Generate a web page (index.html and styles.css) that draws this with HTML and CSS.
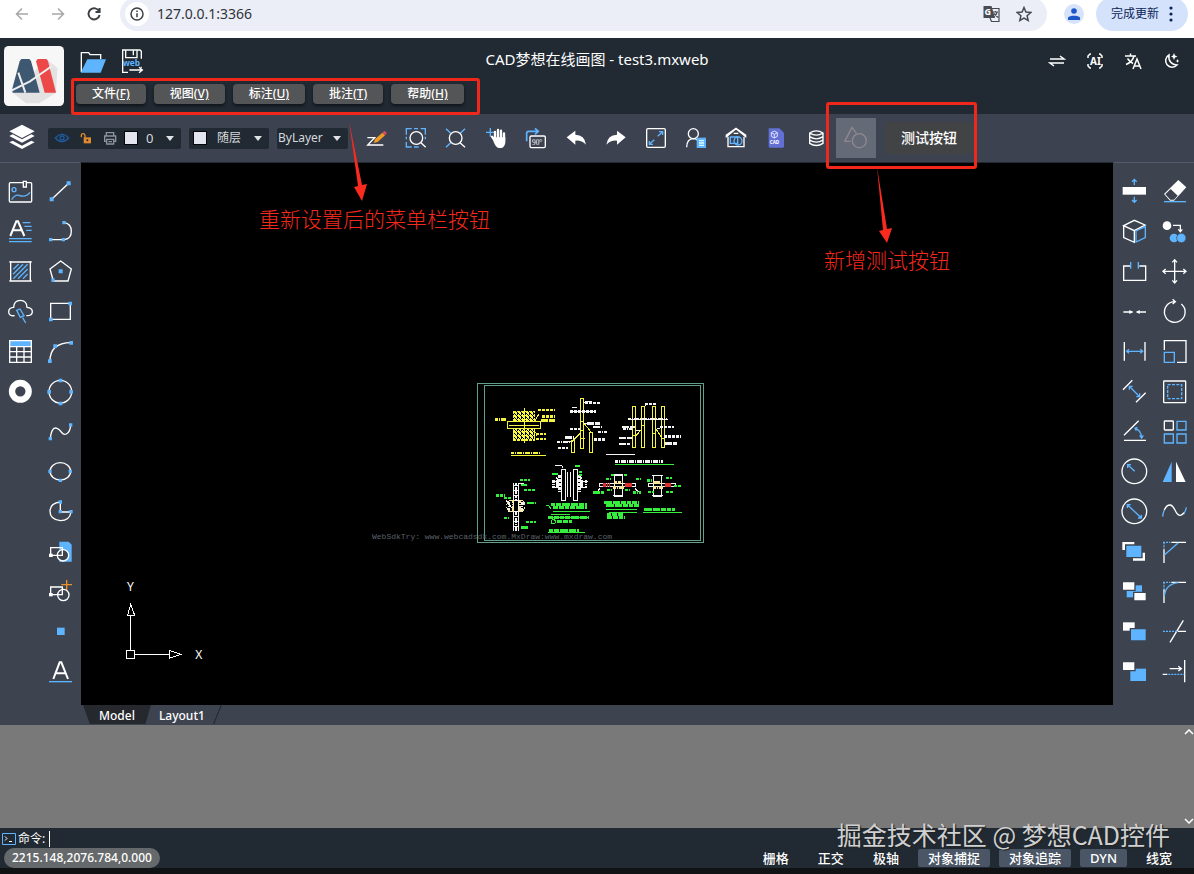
FILE: index.html
```html
<!DOCTYPE html>
<html lang="zh-CN">
<head>
<meta charset="utf-8">
<title>CAD梦想在线画图</title>
<link rel="stylesheet" href="styles.css">
</head>
<body>
<div class="browser">
  <button class="nav dim" aria-label="后退"><svg width="14" height="14" viewBox="0 0 14 14"><path d="M13 7H2M7 1.500L1.500 7 7 12.500"/></svg></button>
  <button class="nav dim" aria-label="前进"><svg width="14" height="14" viewBox="0 0 14 14"><path d="M1 7h11M7 1.500L12.500 7 7 12.500"/></svg></button>
  <button class="nav" aria-label="刷新"><svg width="14" height="14" viewBox="0 0 14 14"><path d="M12.200 4.500A5.600 5.600 0 1 0 12.600 8M12.600 1v4H8.500"/></svg></button>
  <div class="address">
    <span class="info"><svg width="14" height="14" viewBox="0 0 14 14"><circle cx="7" cy="7" r="6"/><path d="M7 6.200v4M7 3.500v1.500"/></svg></span>
    <input class="url" aria-label="地址" value="127.0.0.1:3366">
    <button class="addr-icon" aria-label="翻译"><svg width="18" height="18" viewBox="0 0 18 18"><path d="M1.500 1h8l3.500 12H1.500z" fill="#474b52" stroke="none"/><path d="M10 3.500h7v13H9.500L8 13M11 7h5M13.500 6v1M15 7.500c-.5 2-2 3.500-3.500 4.500M12 8.500l4 4" stroke-width="1.200"/><text x="2.500" y="10" class="tiny-g">G</text></svg></button>
    <button class="addr-icon" aria-label="收藏"><svg width="16" height="16" viewBox="0 0 16 16"><path d="M8 1.500l1.900 4.600 4.900.4-3.700 3.200 1.100 4.800L8 12l-4.200 2.500 1.100-4.800L1.200 6.500l4.900-.4z"/></svg></button>
  </div>
  <button class="avatar" aria-label="用户"><svg width="12" height="12" viewBox="0 0 12 12"><circle cx="6" cy="3" r="2.800"/><path d="M0 12V9.500C1.500 7 10.500 7 12 9.500V12z"/></svg></button>
  <button class="update">完成更新<svg width="4" height="16" viewBox="0 0 4 16"><circle cx="2" cy="2" r="1.600"/><circle cx="2" cy="8" r="1.600"/><circle cx="2" cy="14" r="1.600"/></svg></button>
</div>

<header class="header">
  <div class="brand">
    <svg class="logo" viewBox="0 0 180 180"><rect width="180" height="180" rx="14" fill="#f7f7f7"/><path d="M26 140l40 32h40l50-32 4-74-32-26z" fill="#e2e2e2"/><path d="M47 46l5-7h24l5 6 26 95H26l-2-8 4-16z" fill="#3f5872"/><path d="M96 46l5-7h26l5 6 24 95h-34z" fill="#ec4848"/><path d="M22 134l56-28 66-46M43 80l21 60" stroke="#eee" stroke-width="6"/></svg>
    <div class="brand-rows">
      <div class="quick">
        <button class="quick-btn" aria-label="打开"><svg width="26" height="26" viewBox="240 144 78 78"><path class="w" d="M244 216v-58h22l4 6h32v14"/><path class="bf" d="M242 218l20-40h56l-16 40z"/></svg></button>
        <button class="quick-btn" aria-label="保存"><svg width="26" height="26" viewBox="360 146 78 78"><path class="w" d="M384 219h-16v-67h52l4 4v22M368 178v-26M377 152v23h34v-23M400 154v14M424 202v3M388 212h38m-9-8l10 8-10 8"/><text x="368" y="200" class="web">web</text></svg></button>
      </div>
      <nav class="menu">
        <button>文件(<u>F)</u></button><button>视图(<u>V)</u></button><button>标注(<u>U)</u></button><button>批注(<u>T)</u></button><button>帮助(<u>H)</u></button>
      </nav>
    </div>
  </div>
  <h1 class="title">CAD梦想在线画图 - test3.mxweb</h1>
  <div class="actions">
    <button aria-label="切换"><svg viewBox="0 0 18 18"><path d="M2 7h14l-4-3M16 11H2l4 3"/></svg></button>
    <button aria-label="AI"><svg viewBox="0 0 18 18"><path d="M5 2H4L2 4v2M13 2h1l2 2v2M5 16H4l-2-2v-2M13 16h1l2-2v-2"/><text x="4" y="13" class="ai">AI</text></svg></button>
    <button aria-label="语言"><svg viewBox="0 0 18 18"><path d="M1 4h11M6.500 1.500V4M10 4c-1 4-4 7-8 8.500M3.500 6.500c2 3 3.500 4 5.500 5M9 17l4-10 4 10M10.500 14h5"/></svg></button>
    <button aria-label="主题"><svg viewBox="0 0 18 18"><path d="M7 3a6.500 6.500 0 1 0 8 10C10 13 6 9 7 3z"/><path class="wf" d="M12 1l1 2.500L15.500 4.500 13 5.500 12 8l-1-2.500L9 4.500l2-1zM15.500 7l.6 1.400 1.400.6-1.400.6-.6 1.400-.6-1.400-1.400-.6 1.400-.6z"/></svg></button>
  </div>
</header>

<div class="toolbar">
  <button class="layers" aria-label="图层"><svg width="28" height="28" viewBox="24 378 84 84"><path class="wf" d="M66 380l38 20-38 20-38-20zM28 414l10-5 28 15 28-15 10 5-38 20zM28 433l10-5 28 15 28-15 10 5-38 20z"/></svg></button>
  <div class="combo combo-layer">
    <svg width="16" height="16" viewBox="162 390 48 48"><path d="M166 414q20-22 40 0-20 22-40 0z" stroke="#20589c"/><circle cx="186" cy="414" r="6" stroke="#20589c"/></svg>
    <svg width="16" height="16" viewBox="234 390 48 48"><path d="M244 412v-6q0-5 5-5t6 5v8" stroke="#e08a2c"/><path d="M251 412h22v18h-22z" fill="#e08a2c"/><circle cx="262" cy="421" r="3" fill="#222a34"/></svg>
    <svg width="16" height="16" viewBox="306 390 48 48"><path d="M319 406v-8h22v8M319 424h-5v-16h33v16h-5M320 418h21v14h-21zM325 425h11" stroke="#8d939b"/></svg>
    <span class="swatch"></span>
    <select aria-label="当前图层"><option>0</option></select>
    <svg class="caret" width="8" height="5" viewBox="0 0 8 5"><path d="M0 0h8L4 5z"/></svg>
  </div>
  <div class="combo combo-color">
    <span class="swatch"></span>
    <select aria-label="颜色"><option>随层</option></select>
    <svg class="caret" width="8" height="5" viewBox="0 0 8 5"><path d="M0 0h8L4 5z"/></svg>
  </div>
  <div class="combo combo-line">
    <select aria-label="线型"><option>ByLayer</option></select>
    <svg class="caret" width="8" height="5" viewBox="0 0 8 5"><path d="M0 0h8L4 5z"/></svg>
  </div>
  <div class="tools">
    <button aria-label="绘制"><svg viewBox="-12 354 120 120"><path class="w" d="M22 413h22l-21 22h47"/><path d="M41 429l4-11 22-20 8 8-22 20z" fill="#f29b24"/><path d="M67 398l6-6 8 7-6 7z" fill="#d94a5c"/></svg></button>
    <button aria-label="窗口缩放"><svg viewBox="108 354 120 120"><path class="b" d="M139 404v-18h16M182 386h14v18M139 426v15h16M162 386h12M139 410v8M162 441h14M196 410v8"/><circle class="w" cx="169" cy="414" r="19"/><path class="w" d="M183 428l14 14"/></svg></button>
    <button aria-label="范围缩放"><svg viewBox="228 354 120 120"><path class="b" d="M258 386l14 14M315 386l-14 14M258 442l14-14"/><circle class="w" cx="287" cy="414" r="19"/><path class="w" d="M300 428l15 14"/></svg></button>
    <button aria-label="平移"><svg viewBox="348 354 120 120"><path class="b" d="M391 384v26M378 397h26"/><path d="M405 420v-24M414 418v-28M423 418v-26M432 420v-20M396 410l12 18" stroke="#fff" stroke-width="7" stroke-linecap="round"/><path class="wf" d="M401 412h35v16q-3 15-13 16h-8q-7-2-14-18z"/></svg></button>
    <button aria-label="旋转90度"><svg viewBox="468 354 120 120"><path class="b" d="M500 424v-24q0-6 6-6h28m-9-9l10 9-10 9" stroke-width="5"/><rect class="w" x="510" y="408" width="46" height="35" rx="4"/><text x="516" y="435" class="deg">90°</text></svg></button>
    <button aria-label="撤销"><svg viewBox="588 354 120 120"><path class="wf" d="M620 412l26-20v12q28 0 32 30-14-14-32-12v12z"/></svg></button>
    <button aria-label="重做"><svg viewBox="708 354 120 120"><path class="wf" d="M797 412l-26-20v12q-28 0-32 30 14-14 32-12v12z"/></svg></button>
    <button aria-label="全屏"><svg viewBox="828 354 120 120"><rect class="w" x="860" y="386" width="56" height="56" rx="4"/><path class="b" d="M893 409l15-14m-11 0h11v10M883 419l-15 14m11 0h-11v-10"/></svg></button>
    <button aria-label="用户"><svg viewBox="948 354 120 120"><circle class="w" cx="1000" cy="401" r="15"/><path class="w" d="M980 442q0-25 20-26 8 0 12 4"/><path class="bf" d="M1010 413h28v31h-28z"/><path d="M1017 422h15M1017 429h15M1017 436h15" stroke="#dff"/></svg></button>
    <button aria-label="图库"><svg viewBox="1068 354 120 120"><path class="w" d="M1099 410l29-24 29 24v-5l-29-20-29 20zM1104 410v30h48v-30M1121 400h14"/><path class="b" d="M1111 411h22v19h-22z"/><circle class="b" cx="1134" cy="423" r="12"/></svg></button>
    <button aria-label="CAD文件"><svg viewBox="1188 354 120 120"><path d="M1226 385h32l14 14v40q0 4-4 4h-38q-4 0-4-4z" fill="#6270d6"/><path d="M1243 393l9 5v11l-9 5-9-5v-11zM1234 398l9 5 9-5M1243 403v11" stroke="#dfe3ff" stroke-width="3"/><text x="1229" y="433" class="cad">CAD</text></svg></button>
    <button aria-label="数据库"><svg viewBox="48 354 120 120"><path class="w" d="M89 399q20-13 40 0v31q-20 13-40 0zM89 399q20 13 40 0M89 410q20 13 40 0M89 420q20 13 40 0"/></svg></button>
    <button class="picked" aria-label="形状"><svg viewBox="168 354 120 120"><path d="M194 424l22-42 13 18M194 424h18" stroke="#8f8890"/><circle cx="238" cy="422" r="21" stroke="#8f8890"/></svg></button>
  </div>
  <button class="test-btn">测试按钮</button>
</div>

<main class="main">
  <aside class="panel">
    <div class="col">
      <button aria-label="图片"><svg viewBox="0 33 120 120"><rect class="w" x="28" y="68" width="67" height="58" rx="3"/><path d="M70 64h9v17h-9z" fill="#3d4450" stroke="#fff"/><circle class="b" cx="42" cy="89" r="6"/><path class="b" d="M35 119q10-16 22-13 20 8 33-9"/></svg></button>
      <button aria-label="多行文字"><svg viewBox="0 153 120 120"><path d="M31 228l18-44h5l19 44M38 211h27" stroke="#fff" stroke-width="6"/><path class="b" d="M68 188h23M73 199h22M78 211h17M27 236h68M27 245h68"/></svg></button>
      <button aria-label="填充"><svg viewBox="0 273 120 120"><path class="w" d="M32 303v62M91 303v62M28 306h67M28 363h67"/><path class="b" d="M40 328l16-16M39 343l30-30M40 356l43-43M54 356l29-29M69 356l14-14"/></svg></button>
      <button aria-label="云线"><svg viewBox="0 393 120 120"><path class="w" d="M44 467q-18 2-18-12 0-12 15-13 1-21 20-21t20 21q17 2 16 14-1 12-18 11"/><path class="b" d="M50 451l10-4 12 20-11 5zM68 473l9 16"/></svg></button>
      <button aria-label="表格"><svg viewBox="0 513 120 120"><path class="bf" d="M28 541h67v17H28z"/><path class="w" d="M29 542h65v65H29zM29 560h65M29 575h65M29 591h65M50 560v47M72 560v47"/></svg></button>
      <button aria-label="圆环"><svg viewBox="0 633 120 120"><circle cx="61" cy="694" r="25" stroke="#fff" stroke-width="19"/></svg></button>
    </div>
    <div class="col">
      <button aria-label="直线"><svg viewBox="120 33 120 120"><path class="w" d="M155 118l51-48"/><path class="bf" d="M149 112h12v12h-12zM200 64h12v12h-12z"/></svg></button>
      <button aria-label="多段线"><svg viewBox="120 153 120 120"><path class="w" d="M192 188q22 3 22 26 0 22-20 25h-42"/><path class="bf" d="M187 183h10v10h-10zM185 234h10v10h-10zM147 234h10v10h-10z"/></svg></button>
      <button aria-label="多边形"><svg viewBox="120 273 120 120"><path class="w" d="M182 303l32 24-10 36h-44l-10-36z"/><path class="bf" d="M176 328h12v12h-12zM154 355h10v10h-10z"/></svg></button>
      <button aria-label="矩形"><svg viewBox="120 393 120 120"><path class="w" d="M152 430h59v48h-59z"/><path class="bf" d="M205 425h11v11h-11zM147 473h11v11h-11z"/></svg></button>
      <button aria-label="圆弧"><svg viewBox="120 513 120 120"><path class="w" d="M150 603q0-54 63-55"/><path class="bf" d="M144 598h11v11h-11zM160 553h11v11h-11zM208 543h11v11h-11z"/></svg></button>
      <button aria-label="圆"><svg viewBox="120 633 120 120"><circle class="w" cx="181" cy="695" r="34"/><path class="bf" d="M176 656h11v11h-11zM142 690h11v11h-11zM208 690h11v11h-11zM176 725h11v11h-11z"/></svg></button>
      <button aria-label="样条曲线"><svg viewBox="120 3 120 120"><path class="w" d="M151 85q4-36 20-30c16 6 14 24 28 17q12-6 13-28"/><path class="bf" d="M146 81h10v10h-10zM207 40h10v10h-10z"/></svg></button>
      <button aria-label="椭圆"><svg viewBox="120 123 120 120"><ellipse class="w" cx="181" cy="184" rx="31" ry="26"/><path class="bf" d="M145 179h10v10h-10zM206 179h10v10h-10zM176 206h10v10h-10z"/></svg></button>
      <button aria-label="椭圆弧"><svg viewBox="120 243 120 120"><path class="w" d="M181 276v30h32q-4 26-32 26-31-3-31-28t31-28"/><path class="bf" d="M176 271h10v10h-10zM176 300h10v10h-10zM208 300h10v10h-10z"/></svg></button>
      <button aria-label="创建块"><svg viewBox="120 363 120 120"><path class="bf" d="M178 395h28l9 9v51h-37z"/><path class="w" d="M152 413h35v23h-35z"/><circle cx="189" cy="436" r="17" fill="#3d4450" stroke="#fff"/><path class="w" d="M187 420v16h-14"/><path class="wf" d="M147 431h11v10h-11z"/></svg></button>
      <button aria-label="插入块"><svg viewBox="120 483 120 120"><path d="M200 510v30M184 524h32" stroke="#e8902c"/><path class="w" d="M152 531h35v23h-35z"/><circle class="w" cx="190" cy="555" r="17"/><path class="wf" d="M147 549h11v10h-11z"/></svg></button>
      <button aria-label="点"><svg viewBox="120 603 120 120"><path class="bf" d="M171 653h23v22h-23z"/></svg></button>
      <button aria-label="文字"><svg viewBox="120 723 120 120"><path d="M160 807l19-50h5l20 50M166 790h31" stroke="#fff" stroke-width="6"/><path class="b" d="M147 815h69"/></svg></button>
    </div>
  </aside>

  <section class="stage">
    <div class="canvas">
      <svg class="drawing" viewBox="0 0 720 525">
        <defs>
          <pattern id="hatch" width="12" height="12" patternUnits="userSpaceOnUse"><path d="M0 12L12 0M0 3h5M6 9h4" stroke="#ffff37" stroke-width="4"/></pattern>
        </defs>
        <g class="frame"><path d="M22 26h678v477H22zM43 32h648v464H43z"/></g>
        <g class="yellow">
          <path d="M130 108h64v30h-64zM130 160h64v36h-64z" fill="url(#hatch)" stroke-dasharray="9 3"/>
          <path d="M112 140h100v20H112zM118 150h90M162 100v104M194 138l12-20M196 170l6 14"/>
          <path class="txt" d="M204 105h52M216 124h40M212 136h44M76 133h34M198 177h30M198 191h30M124 233h86"/>
          <path d="M124 240h104"/>
          <path d="M332 70h9v150h-9zM304 196h10v36h-10zM358 172h10v60h-10zM306 200l26-26M342 145l22 27M332 190h12M331 138h12M331 165h12"/>
          <path d="M487 94h10v124h-10zM514 94h10v124h-10zM547 94h10v124h-10zM574 94h10v124h-10zM486 180h12M513 150h12M546 176h12M573 190h12M497 184l18-22M557 160l17 26" />
        </g>
        <g class="white">
          <path d="M300 109h78M341 82l12-4h12M306 96h14M474 132h120M524 92l8-8M497 165h14M560 160h10M341 145h12M290 200h14M440 265l-5-8"/>
          <path class="txt" d="M345 83h45M300 109h78M350 145h40M368 155h28M385 170h26M300 161h30M284 187h28M262 200h38M264 219h30M372 193h32M525 86h34M475 132h116M455 155h40M460 162h26M446 188h40M446 206h35M570 155h42M582 184h50M584 205h38M436 259h144"/>
          <path d="M408 237h86"/>
          <path d="M274 283h12v92h-12zM310 283h12v92h-12zM293 292v74M302 292v74M246 320h27M324 320h30M250 336h22M324 336h28M256 270h18l6 10M318 270h12M258 308l14 12M336 308l-12 12"/>
          <path class="txt" d="M250 316v22M262 314v26M334 314v26M348 316v22M268 300v50M328 300v50"/>
          <path d="M131 324v144M145 324v144M131 330h14M131 345h14M131 360h14M131 375h14M131 410h14M131 425h14M131 440h14M131 455h14M145 325h16M108 375l22 30M145 380l18 8"/>
          <path class="txt" d="M138 324v50M138 412v56M116 382v28M156 382v28"/>
          <path d="M388 326h108v8H388zM432 298h24v66h-24zM428 300h32M428 362h32M535 326h80v8h-80zM550 300h25v64h-25zM546 302h33M546 362h33M390 340l-10 12M494 340l12 10"/>
        </g>
        <g class="cream">
          <path class="txt" d="M128 376v36M150 376v36M432 322h28M430 337h32M548 322h28M550 337h28"/>
          <path d="M110 390q4-18 18-12M165 390q-4-18-18-12M110 396q4 16 18 12M165 396q-4 16-18 12"/>
        </g>
        <g class="red"><path class="txt" d="M400 330h20M464 330h26M584 330h20"/></g>
        <g class="green">
          <path class="txt" d="M150 314h30M152 330h20M162 345h36M78 361h26M102 369h20M170 384h28M102 428h16M168 440h30M152 457h22M245 296h18M314 272h16M328 290h12M328 300h12M368 352h34M424 300h8M462 300h10M498 312h14M490 352h24M408 312h14M532 316h14M588 308h18M612 333h22M534 350h18M588 350h24M412 345h18M466 345h18"/>
          <path class="txt thick" d="M242 389h110M250 397h102M235 427h122M262 440h44M236 465h90M402 382h104M408 392h98M410 418h50M412 427h52M522 403h92"/>
          <path d="M228 391h8l6 10M250 408h110M243 417h58M240 428h118M235 472h110M408 402h94M416 412h86M518 411h118M436 267h176"/>
          <circle cx="250" cy="440" r="6"/>
        </g>
      </svg>
      <span class="trial">WebSdkTry: www.webcadsdk.com.MxDraw:www.mxdraw.com</span>
      <svg class="ucs" viewBox="369 501 261 252"><path d="M379 721h25v25h-25zM391 721V616M404 733h104M383 616l9-33 12 33zM508 721v24l35-12z"/><text x="381" y="543">Y</text><text x="586" y="747">X</text></svg>
    </div>
    <div class="tabs">
      <button class="tab active">Model</button><button class="tab">Layout1</button>
    </div>
  </section>

  <aside class="panel">
    <div class="col">
      <button aria-label="标高"><svg viewBox="42 33 120 120"><path class="wf" d="M68 81h70v23H68z"/><path class="b" d="M103 75V58m-7 7l7-7 7 7M103 110v17m-7-7l7 7 7-7"/></svg></button>
      <button aria-label="三维"><svg viewBox="42 153 120 120"><path class="w" d="M71 197l32-16 32 14-32 17zM71 197v36l32 14v-35"/><path class="b" d="M108 213l28-13v33l-28 13z"/></svg></button>
      <button aria-label="打断"><svg viewBox="42 273 120 120"><path class="w" d="M90 318H71v43h66v-43h-19"/><path class="b" d="M92 306v20M115 306v20"/></svg></button>
      <button aria-label="合并"><svg viewBox="42 393 120 120"><path class="w" d="M70 456h27M111 456h27"/><path class="wf" d="M88 450l12 6-12 6zM119 450l-12 6 12 6z"/></svg></button>
      <button aria-label="线性标注"><svg viewBox="42 513 120 120"><path class="w" d="M73 546v56M135 546v56"/><path class="b" d="M80 574h48m-7-6l7 6-7 6M87 568l-7 6 7 6"/></svg></button>
      <button aria-label="对齐标注"><svg viewBox="42 633 120 120"><path class="w" d="M69 689l28-28M108 727l29-29"/><path class="b" d="M88 679l31 31m-10 0h10v-10M88 689v-10h10"/></svg></button>
      <button aria-label="角度标注"><svg viewBox="42 753 120 120"><path class="w" d="M72 826l44-44M72 841h66"/><path class="b" d="M105 805q18 5 20 28m-6-7l6 8 5-8M112 802l-7 3 4 7"/></svg></button>
      <button aria-label="半径标注"><svg viewBox="42 33 120 120"><circle class="w" cx="103" cy="94" r="37"/><path class="b" d="M104 94L83 74m0 10V74h10"/></svg></button>
      <button aria-label="直径标注"><svg viewBox="42 153 120 120"><circle class="w" cx="103" cy="214" r="37"/><path class="b" d="M82 194l42 40m-10 0h10v-10M82 204v-10h10"/></svg></button>
      <button aria-label="置顶"><svg viewBox="42 273 120 120"><path class="wf" d="M67 306h36v24H67zM99 338h36v24H99z"/><path d="M77 315h49v38H77z" fill="#5fb4ff" stroke="#3d4450"/></svg></button>
      <button aria-label="置底"><svg viewBox="42 393 120 120"><path class="bf" d="M80 436h46v36H80z"/><path d="M67 425h38v26H67zM101 457h38v26h-38z" fill="#fff" stroke="#3d4450"/></svg></button>
      <button aria-label="前置"><svg viewBox="42 513 120 120"><path class="wf" d="M69 547h35v25H69z"/><path d="M91 566h48v37H91z" fill="#5fb4ff" stroke="#3d4450"/></svg></button>
      <button aria-label="后置"><svg viewBox="42 633 120 120"><path class="bf" d="M91 686h47v37H91z"/><path d="M67 665h38v27H67z" fill="#fff" stroke="#3d4450"/></svg></button>
    </div>
    <div class="col">
      <button aria-label="删除"><svg viewBox="162 33 120 120"><path class="wf" d="M235 60l24 22-37 40h-12l-18-20z"/><path d="M212 87l21 20-11 12h-11l-15-16z" fill="#3d4450"/><path class="b" d="M192 125h66"/></svg></button>
      <button aria-label="复制"><svg viewBox="162 153 120 120"><circle class="wf" cx="201" cy="197" r="13"/><path class="w" d="M219 196h22v17m-6-5l6 7 6-7"/><circle class="bf" cx="222" cy="234" r="13"/><circle cx="244" cy="234" r="14" fill="#5fb4ff" stroke="#3d4450" stroke-width="2"/></svg></button>
      <button aria-label="移动"><svg viewBox="162 273 120 120"><path class="w" d="M224 300v68M190 334h67M217 307l7-8 7 8M217 361l7 8 7-8M197 327l-8 7 8 7M250 327l8 7-8 7"/></svg></button>
      <button aria-label="旋转"><svg viewBox="162 393 120 120"><path class="w" d="M244 432a31 31 0 1 1-20-7m-6-7l8 7-8 7"/></svg></button>
      <button aria-label="缩放"><svg viewBox="162 513 120 120"><path class="w" d="M193 570v-28h65v65h-27"/><path class="b" d="M193 577h30v30h-30z"/></svg></button>
      <button aria-label="偏移"><svg viewBox="162 633 120 120"><rect class="w" x="191" y="663" width="66" height="65" rx="2"/><path class="b" d="M203 674h42v42h-42z" stroke-dasharray="9 4"/></svg></button>
      <button aria-label="阵列"><svg viewBox="162 753 120 120"><rect class="w" x="193" y="783" width="27" height="27" rx="2"/><path class="b" d="M231 784h27v26h-27zM193 822h27v27h-27zM231 822h27v27h-27z"/></svg></button>
      <button aria-label="镜像"><svg viewBox="162 33 120 120"><path class="bf" d="M215 65v61h-27z"/><path class="wf" d="M228 65v61h29z"/></svg></button>
      <button aria-label="拟合"><svg viewBox="162 153 120 120"><path class="b" d="M188 230q1-12 5-20M259 202q-2 12-8 20"/><path class="w" d="M193 210q7-16 18-15c16 4 14 32 30 31q7-1 11-8"/></svg></button>
      <button aria-label="倒角"><svg viewBox="162 273 120 120"><path class="w" d="M214 307h44M192 328v41"/><path class="b" d="M189 307h22M192 307v20" stroke-dasharray="6 3"/><path class="b" d="M193 345l42-37"/></svg></button>
      <button aria-label="圆角"><svg viewBox="162 393 120 120"><path class="w" d="M214 427h44M192 448v41"/><path class="b" d="M189 427h22M192 427v20" stroke-dasharray="6 3"/><path class="b" d="M193 468q4-36 42-40"/></svg></button>
      <button aria-label="修剪"><svg viewBox="162 513 120 120"><path class="w" d="M250 541l-40 66M234 574h24"/><path class="b" d="M189 574h42" stroke-dasharray="6 3"/></svg></button>
      <button aria-label="延伸"><svg viewBox="162 633 120 120"><path class="w" d="M254 660v67M209 686h34m-8-7l9 7-9 7M188 703h14"/><path class="b" d="M205 703h48" stroke-dasharray="6 3"/></svg></button>
    </div>
  </aside>
</main>

<section class="output">
  <button aria-label="向上滚动"><svg width="10" height="6" viewBox="0 0 10 6"><path d="M1 5l4-4 4 4"/></svg></button>
  <button aria-label="向下滚动"><svg width="10" height="6" viewBox="0 0 10 6"><path d="M1 1l4 4 4-4"/></svg></button>
</section>
<footer class="footer">
  <div class="command">
    <svg width="14" height="12" viewBox="0 0 14 12"><path class="b" d="M.5.500h13v11H.5z"/><path class="w" d="M3 3.500l2 2-2 2M7 8.500h3"/></svg>
    <label for="cmd">命令:</label>
    <input id="cmd" type="text">
  </div>
  <div class="status">
    <span class="coords">2215.148,2076.784,0.000</span>
    <div class="modes">
      <button>栅格</button><button>正交</button><button>极轴</button><button class="on">对象捕捉</button><button class="on">对象追踪</button><button class="on">DYN</button><button>线宽</button>
    </div>
  </div>
  <p class="credit">掘金技术社区 @ 梦想CAD控件</p>
</footer>

<div class="mark mark-menu"></div>
<div class="mark mark-test"></div>
<svg class="arrow arrow-menu" width="24" height="84" viewBox="0 0 24 84"><path d="M2 0l13 64 5-1-5 17L7 66l4-1z"/></svg>
<svg class="arrow arrow-test" width="20" height="78" viewBox="0 0 20 78"><path d="M1 0l10 62 5-1-5 15-8-12 4-1z"/></svg>
<p class="note note-menu">重新设置后的菜单栏按钮</p>
<p class="note note-test">新增测试按钮</p>
</body>
</html>
```

FILE: styles.css
```css
* { box-sizing: border-box; }
body {
  margin: 0;
  min-height: 100vh;
  position: relative;
  display: flex;
  flex-direction: column;
  background: #111214;
  color: #fff;
  font: 13px/20px "Noto Sans", "Noto Sans CJK SC", sans-serif;
}
button, input, select {
  font: inherit;
  color: inherit;
  background: none;
  border: 0;
  padding: 0;
  margin: 0;
}
p, h1 { margin: 0; }
svg { display: block; flex: none; fill: none; stroke-width: 4; }
.w { stroke: #fff; }
.b { stroke: #5fb4ff; }
.wf { fill: #fff; stroke: none; }
.bf { fill: #5fb4ff; stroke: none; }

/* Browser bar */
.browser {
  height: 38px;
  padding: 0 6px 0 4px;
  display: flex;
  background: #fff;
  color: #333;
}
.nav { width: 36px; height: 28px; display: grid; place-items: center; }
.nav svg { stroke: #3c4043; stroke-width: 2; }
.nav.dim svg { stroke: #a4a6a8; stroke-width: 1.500; }
.address {
  flex: 1;
  height: 34px;
  margin: -3px 17px 0 8px;
  padding: 0 15px 0 5px;
  display: flex;
  align-items: center;
  gap: 16px;
  border-radius: 17px;
  background: #ebeef7;
}
.info { width: 24px; height: 24px; border-radius: 50%; background: #fff; display: grid; place-items: center; }
.info svg { stroke: #3c4043; stroke-width: 1.500; }
.url { flex: 1; min-width: 0; margin-left: -8px; font-size: 14px; color: #30333a; outline: none; }
.addr-icon svg { stroke: #474b52; stroke-width: 1.500; }
.tiny-g { font: bold 9px "Noto Sans", sans-serif; fill: #fff; stroke: none; }
.avatar { width: 20px; height: 20px; margin-top: 4px; border-radius: 50%; background: #d7e3fb; display: grid; place-items: center; }
.avatar svg { fill: #1b57c9; }
.update {
  height: 34px;
  margin: -3px 0 0 12px;
  padding: 0 15px;
  display: flex;
  align-items: center;
  gap: 10px;
  border-radius: 17px;
  background: #d5e2fb;
  font-size: 12px;
  color: #0b2558;
}
.update svg { fill: #0b2558; }

/* Header */
.header {
  height: 76px;
  padding: 8px 4px;
  display: grid;
  grid-template-columns: minmax(0, 1fr) auto minmax(0, 1fr);
  background: #212932;
}
.brand { display: flex; gap: 12px; }
.logo { width: 60px; height: 60px; }
.brand-rows { display: flex; flex-direction: column; gap: 8px; }
.quick { height: 30px; padding-left: 4px; display: flex; align-items: center; gap: 14px; }
.quick-btn { width: 26px; height: 26px; }
.web { font: bold 25px "Noto Sans", sans-serif; fill: #5fb4ff; }
.menu { display: flex; gap: 8px; }
.menu button {
  height: 20px;
  padding: 0 16px;
  border-radius: 4px;
  background: #545556;
  box-shadow: 0 2px 3px #10151b;
  font-size: 12px;
  font-weight: 500;
  line-height: 20px;
  white-space: nowrap;
}
.title { padding-top: 3px; font-size: 15px; font-weight: 400; line-height: 20px; white-space: nowrap; }
.actions { display: flex; justify-content: flex-end; gap: 20px; padding: 6px 10px 0 0; }
.actions button { width: 18px; height: 18px; }
.actions svg { width: 18px; height: 18px; stroke: #fff; stroke-width: 1.500; }
.ai { font: bold 10px "Noto Sans", sans-serif; fill: #fff; stroke: none; }

/* Toolbar */
.toolbar { height: 48px; display: flex; align-items: center; background: #3c4250; }
.layers { width: 44px; display: grid; place-items: center; margin-right: 4px; }
.combo {
  height: 21px;
  margin-right: 8px;
  padding-right: 7px;
  display: flex;
  align-items: center;
  border-radius: 2px;
  background: #212932;
  color: #d5d8dc;
}
.combo select { appearance: none; height: 20px; line-height: 20px; outline: none; }
.combo-layer { padding-left: 6px; }
.combo-layer svg:nth-child(-n+2) { margin-right: 8px; }
.combo-layer svg:nth-child(3) { margin-right: 6px; }
.combo-layer select { width: 20px; margin-left: 8px; }
.combo-color { padding-left: 4px; }
.combo-color select { width: 37px; margin-left: 10px; font-size: 12px; }
.combo-line { padding-left: 1px; }
.combo-line select { width: 55px; font-size: 12px; }
.swatch { width: 14px; height: 14px; border: 1px solid #05070a; background: #e3e6ee; }
.caret { fill: #e0e3e6; }
.tools { display: flex; }
.tools button, .col button { width: 40px; height: 40px; }
.tools svg, .col svg { width: 40px; height: 40px; }
.tools .picked { background: #646b76; }
.deg { font: 22px "Liberation Serif", serif; fill: #fff; }
.cad { font: bold 14px "Noto Sans", sans-serif; fill: #fff; }
.test-btn {
  height: 32px;
  margin-left: 9px;
  padding: 0 16px;
  border-radius: 4px;
  background: #424345;
  font-size: 14px;
  font-weight: 500;
}

/* Work area */
.main { flex: 1; display: flex; background: #3d4450; }
.panel { padding: 8px 0; display: flex; border-top: 1px solid #555c69; }
.col { display: flex; flex-direction: column; }
.stage { flex: 1; min-width: 0; display: flex; flex-direction: column; margin: 0 1px; }
.canvas { flex: 1; position: relative; overflow: hidden; border-top: 1px solid #212932; background: #000; }
.drawing { position: absolute; left: 389px; top: 212px; width: 240px; height: 175px; shape-rendering: crispEdges; stroke-width: 3; }
.frame { stroke: #62a08c; }
.yellow { stroke: #f4f43c; }
.white { stroke: #f4f4f4; }
.cream { stroke: #f7e6a0; }
.red { stroke: #e03030; }
.green { stroke: #36ee3c; }
.txt { stroke-width: 7; stroke-dasharray: 9 2 4 1 6 2; }
.red .txt { stroke-width: 14; }
.thick { stroke-width: 9; stroke-dasharray: 14 2 9 1 6 2; }
.trial { position: absolute; left: 291px; top: 368px; font: 8px/12px "Liberation Mono", monospace; color: #5b6169; white-space: nowrap; }
.ucs { position: absolute; left: 42px; bottom: 44px; width: 87px; height: 84px; stroke: #fff; stroke-width: 3; shape-rendering: crispEdges; overflow: visible; }
.ucs text { font: 36px "Noto Sans", sans-serif; fill: #fff; stroke: none; }
.tabs { height: 20px; display: flex; padding-left: 2px; }
.tab { position: relative; padding: 0 13px 0 8px; font-size: 12px; font-weight: 500; line-height: 21px; }
.tab::after { content: ""; position: absolute; right: 0; top: 0; height: 19px; border-right: 1px solid #20242b; transform: skewX(-22deg); }
.tab.active { padding: 0 16px; background: #25282d; clip-path: polygon(0 0, 100% 0, 92% 95%, 10% 95%); }

/* Command output and status */
.output { height: 103px; padding: 4px 0; display: flex; flex-direction: column; justify-content: space-between; align-items: flex-end; background: #797979; }
.output svg { stroke: #fff; stroke-width: 1.500; }
.footer { position: relative; padding-bottom: 6px; background: #111214; }
.command { height: 20px; padding: 2px 0 0 2px; display: flex; align-items: center; gap: 2px; background: #212932; }
.command svg { stroke-width: 1; }
.command label { font-size: 12px; }
.command input { flex: 1; height: 16px; margin-left: 2px; border-left: 1px solid #fff; outline: none; }
.status { height: 20px; padding: 0 12px 0 4px; display: flex; align-items: center; justify-content: space-between; background: #212932; }
.coords { padding: 0 8px; border-radius: 10px; background: #66696b; font-size: 12px; font-weight: 500; }
.modes { display: flex; gap: 9px; }
.modes button { height: 18px; padding: 0 10px; border-radius: 2px; font-size: 13px; font-weight: 500; line-height: 18px; white-space: nowrap; }
.modes .on { background: #4a5665; }
.credit { position: absolute; right: 24px; top: -12px; font: 25px/36px "Noto Sans CJK SC", sans-serif; color: #cfd0d1; text-shadow: 1px 1px 1px #222; white-space: nowrap; pointer-events: none; }

/* Annotations over the page */
.mark { position: absolute; border: 3px solid #f0281c; border-radius: 3px; pointer-events: none; }
.mark-menu { left: 71px; top: 78px; width: 409px; height: 37px; }
.mark-test { left: 826px; top: 102px; width: 151px; height: 67px; }
.arrow { position: absolute; fill: #fb2a1e; pointer-events: none; }
.arrow-menu { left: 347px; top: 121px; }
.arrow-test { left: 876px; top: 167px; }
.note { position: absolute; font: 300 21px/28px "Noto Sans CJK SC", sans-serif; color: #f5281c; white-space: nowrap; }
.note-menu { left: 259px; top: 204px; }
.note-test { left: 824px; top: 245px; }
```
